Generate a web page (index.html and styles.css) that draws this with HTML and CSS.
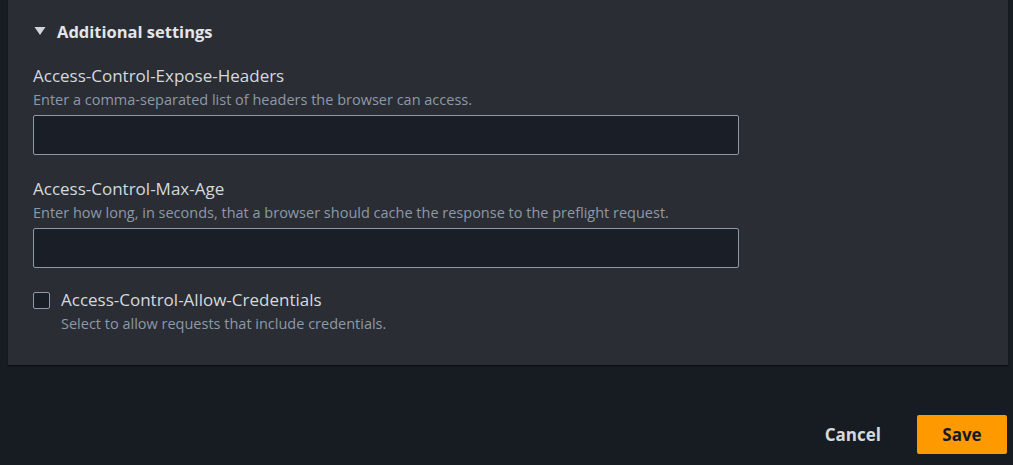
FILE: index.html
```html
<!DOCTYPE html>
<html>
<head>
<meta charset="utf-8">
<link rel="stylesheet" href="styles.css">
</head>
<body>
<div class="panel">
  <div class="expander">
    <svg class="caret" width="12" height="10" viewBox="0 0 12 10"><path d="M0.5 1 H11.5 L6 9 Z" fill="#d1d5db"/></svg>
    <span>Additional settings</span>
  </div>
  <div class="field">
    <div class="label">Access-Control-Expose-Headers</div>
    <div class="desc">Enter a comma-separated list of headers the browser can access.</div>
    <input class="input" type="text">
  </div>
  <div class="field">
    <div class="label">Access-Control-Max-Age</div>
    <div class="desc">Enter how long, in seconds, that a browser should cache the response to the preflight request.</div>
    <input class="input" type="text">
  </div>
  <div class="check-row">
    <span class="checkbox"></span>
    <div>
      <div class="label">Access-Control-Allow-Credentials</div>
      <div class="desc">Select to allow requests that include credentials.</div>
    </div>
  </div>
</div>
<div class="actions">
  <button class="btn-link">Cancel</button>
  <button class="btn-primary">Save</button>
</div>
</body>
</html>
```
FILE: styles.css
```css
* { box-sizing: border-box; }
html, body { margin: 0; padding: 0; }
body {
  background: #171b22;
  font-family: "Open Sans", "Noto Sans", sans-serif;
  color: #d1d5db;
  width: 1013px;
  height: 465px;
  overflow: hidden;
}
.panel {
  margin: 0 5px 0 8px;
  background: #2a2d33;
  height: 365px;
  padding: 19px 25px 0 25px;
  box-shadow: 0 1px 1px rgba(0,0,0,0.5);
}
.expander {
  display: flex;
  align-items: center;
  gap: 11px;
  font-weight: 700;
  font-size: 16.5px;
  height: 24px;
  color: #e2e5e9;
  padding-left: 1px;
}
.caret { display: block; }
.field { margin-top: 22px; }
.field + .field { margin-top: 23px; }
.label {
  font-size: 17px;
  line-height: 22px;
  color: #d5d9de;
}
.desc {
  font-size: 14.5px;
  line-height: 20px;
  color: #8d99a8;
  margin-top: 3px;
}
.input {
  display: block;
  margin-top: 5px;
  width: 706px;
  height: 40px;
  background: #1a1f27;
  border: 1px solid #8d99a8;
  border-radius: 2px;
  outline: none;
}
.check-row {
  display: flex;
  gap: 11px;
  margin-top: 21px;
}
.checkbox {
  width: 17px;
  height: 17px;
  margin-top: 3px;
  border: 1px solid #8d99a8;
  border-radius: 2px;
  background: #1a1f27;
  flex: none;
}
.actions {
  display: flex;
  justify-content: flex-end;
  align-items: center;
  gap: 36px;
  padding: 50px 6px 0 0;
}
.btn-link, .btn-primary {
  font-family: inherit;
  font-size: 17px;
  font-weight: 700;
  border: none;
  cursor: pointer;
}
.btn-link {
  background: none;
  color: #d5d9de;
  padding: 0;
}
.btn-primary {
  background: #ff9900;
  color: #0f1b2a;
  width: 90px;
  height: 39px;
  border-radius: 2px;
}
```
